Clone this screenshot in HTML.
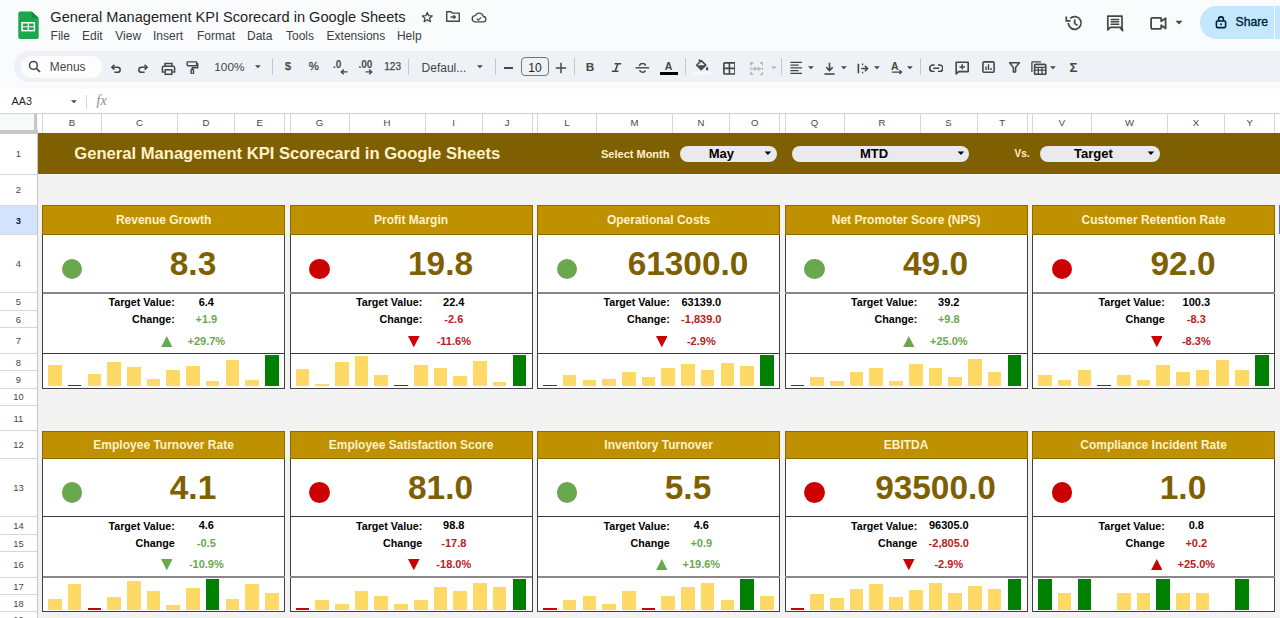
<!DOCTYPE html>
<html><head><meta charset="utf-8"><style>
html,body{margin:0;padding:0;width:1280px;height:618px;overflow:hidden;background:#fff;}
body{position:relative;font-family:"Liberation Sans", sans-serif;}
.t{position:absolute;white-space:nowrap;}
.r{position:absolute;}
</style></head><body>
<div class="r" style="left:0.00px;top:0.00px;width:1280.00px;height:88.50px;background:#f9fbfd;"></div>
<svg class="r" style="left:17.50px;top:10.50px;" width="21" height="28" viewBox="0 0 21 28"><path d="M2 0.4 H13.6 L20.7 7 V26.3 A1.7 1.7 0 0 1 19 28 H2 A1.7 1.7 0 0 1 0.3 26.3 V2 A1.7 1.7 0 0 1 2 0.4 Z" fill="#19a84e"/><path d="M13.6 0.4 L20.7 7 H15.3 A1.7 1.7 0 0 1 13.6 5.3Z" fill="#0e8c3e"/><rect x="3.3" y="11" width="13.8" height="9.4" fill="#fff"/><rect x="4.9" y="12.5" width="4.8" height="2.8" fill="#19a84e"/><rect x="10.9" y="12.5" width="4.8" height="2.8" fill="#19a84e"/><rect x="4.9" y="16.3" width="4.8" height="2.6" fill="#19a84e"/><rect x="10.9" y="16.3" width="4.8" height="2.6" fill="#19a84e"/></svg>
<div class="t" style="left:50.30px;top:9.94px;font-size:14.6px;line-height:14.6px;color:#1f1f1f;font-weight:normal;">General Management KPI Scorecard in Google Sheets</div>
<svg class="r" style="left:421.00px;top:10.80px;" width="12.5" height="12.5" viewBox="0 0 16 16"><path d="M8 1.8 L9.8 6 L14.3 6.3 L10.9 9.2 L12 13.6 L8 11.2 L4 13.6 L5.1 9.2 L1.7 6.3 L6.2 6 Z" fill="none" stroke="#444746" stroke-width="1.6" stroke-linejoin="round"/></svg>
<svg class="r" style="left:445.00px;top:10.00px;" width="16" height="13" viewBox="0 0 16 13"><path d="M1.7 1.7 H6 L7.4 3.1 H14.3 V11.2 H1.7 Z" fill="none" stroke="#444746" stroke-width="1.4" stroke-linejoin="round"/><path d="M5.5 7 H10.3 M8.5 5.2 L10.4 7 L8.5 8.8" fill="none" stroke="#444746" stroke-width="1.3"/></svg>
<svg class="r" style="left:470.80px;top:10.90px;" width="15.8" height="13.3" viewBox="0 0 19 16"><path d="M5 13 H14.5 A3.2 3.2 0 0 0 14.8 6.6 A5 5 0 0 0 5.3 5.6 A3.7 3.7 0 0 0 5 13 Z" fill="none" stroke="#444746" stroke-width="1.6"/><path d="M7 9.3 L8.8 11 L12.2 7.6" fill="none" stroke="#444746" stroke-width="1.4"/></svg>
<div class="t" style="left:50.60px;top:29.74px;font-size:12.0px;line-height:12.0px;color:#3c4043;font-weight:normal;">File</div>
<div class="t" style="left:82.00px;top:29.74px;font-size:12.0px;line-height:12.0px;color:#3c4043;font-weight:normal;">Edit</div>
<div class="t" style="left:115.30px;top:29.74px;font-size:12.0px;line-height:12.0px;color:#3c4043;font-weight:normal;">View</div>
<div class="t" style="left:153.00px;top:29.74px;font-size:12.0px;line-height:12.0px;color:#3c4043;font-weight:normal;">Insert</div>
<div class="t" style="left:197.00px;top:29.74px;font-size:12.0px;line-height:12.0px;color:#3c4043;font-weight:normal;">Format</div>
<div class="t" style="left:247.00px;top:29.74px;font-size:12.0px;line-height:12.0px;color:#3c4043;font-weight:normal;">Data</div>
<div class="t" style="left:286.00px;top:29.74px;font-size:12.0px;line-height:12.0px;color:#3c4043;font-weight:normal;">Tools</div>
<div class="t" style="left:326.60px;top:29.74px;font-size:12.0px;line-height:12.0px;color:#3c4043;font-weight:normal;">Extensions</div>
<div class="t" style="left:396.90px;top:29.74px;font-size:12.0px;line-height:12.0px;color:#3c4043;font-weight:normal;">Help</div>
<svg class="r" style="left:1064.00px;top:13.00px;" width="20" height="20" viewBox="0 0 20 20"><path d="M4.3 10 A6.4 6.4 0 1 0 6.2 5.4" fill="none" stroke="#444746" stroke-width="1.7"/><path d="M2.3 3.6 V7.9 H6.6" fill="none" stroke="#444746" stroke-width="1.7"/><path d="M10.7 6.5 V10.6 L13.6 12.4" fill="none" stroke="#444746" stroke-width="1.7"/></svg>
<svg class="r" style="left:1105.00px;top:13.00px;" width="20" height="20" viewBox="0 0 20 20"><path d="M2.8 3.2 H17 V14.3 H5.3 L2.8 16.8 Z M17 14.3 L17.6 17.6 L14.8 14.3" fill="none" stroke="#444746" stroke-width="1.7" stroke-linejoin="round"/><path d="M5.6 6.4 H14.2 M5.6 8.8 H14.2 M5.6 11.2 H14.2" stroke="#444746" stroke-width="1.5"/></svg>
<svg class="r" style="left:1148.00px;top:13.00px;" width="22" height="20" viewBox="0 0 22 20"><path d="M3.1 6 Q3.1 4.8 4.3 4.8 H12.4 Q13.2 4.8 13.2 5.6 V8.3 L17.6 5.2 V15.4 L13.2 12.3 V15 Q13.2 15.8 12.4 15.8 H4.3 Q3.1 15.8 3.1 14.6 Z" fill="none" stroke="#444746" stroke-width="1.8" stroke-linejoin="round"/></svg>
<svg class="r" style="left:1174.50px;top:19.50px;" width="8" height="5" viewBox="0 0 8 5"><path d="M0.5 0.8 H7.5 L4 4.4Z" fill="#444746"/></svg>
<div class="r" style="left:1200.40px;top:6.00px;width:73.20px;height:32.50px;background:#c2e7ff;border-radius:16.25px 0 0 16.25px;"></div>
<div class="r" style="left:1274.60px;top:6.00px;width:6.00px;height:32.50px;background:#c2e7ff;"></div>
<svg class="r" style="left:1214.00px;top:15.00px;" width="14" height="14" viewBox="0 0 14 14"><rect x="2.4" y="6" width="9.2" height="6.6" rx="1" fill="none" stroke="#001d35" stroke-width="1.6"/><path d="M4.6 6 V4.3 A2.4 2.4 0 0 1 9.4 4.3 V6" fill="none" stroke="#001d35" stroke-width="1.6"/><circle cx="7" cy="9.3" r="1" fill="#001d35"/></svg>
<div class="t" style="left:1235.60px;top:16.27px;font-size:12.2px;line-height:12.2px;color:#001d35;font-weight:normal;-webkit-text-stroke:0.35px #001d35;">Share</div>
<div class="r" style="left:14.00px;top:50.60px;width:1280.00px;height:31.90px;background:#eef1f6;border-radius:16px;"></div>
<div class="r" style="left:20.60px;top:56.00px;width:81.40px;height:22.40px;background:#fdfdfe;border-radius:11.2px;"></div>
<svg class="r" style="left:28.30px;top:60.30px;" width="14" height="14" viewBox="0 0 14 14"><circle cx="5.4" cy="5.4" r="3.9" fill="none" stroke="#444746" stroke-width="1.5"/><path d="M8.2 8.2 L12 12" stroke="#444746" stroke-width="1.7"/></svg>
<div class="t" style="left:49.80px;top:61.83px;font-size:11.9px;line-height:11.9px;color:#444746;font-weight:normal;">Menus</div>
<svg class="r" style="left:110.00px;top:62.00px;" width="13" height="13" viewBox="0 0 13 13"><path d="M3.2 5.2 H7.6 A2.55 2.55 0 0 1 7.6 10.3 H4.4" fill="none" stroke="#444746" stroke-width="1.6"/><path d="M4.4 2.8 L1.9 5.2 L4.4 7.6" fill="none" stroke="#444746" stroke-width="1.6"/></svg>
<svg class="r" style="left:135.50px;top:62.00px;" width="13" height="13" viewBox="0 0 13 13"><path d="M9.8 5.2 H5.4 A2.55 2.55 0 0 0 5.4 10.3 H8.6" fill="none" stroke="#444746" stroke-width="1.6"/><path d="M8.6 2.8 L11.1 5.2 L8.6 7.6" fill="none" stroke="#444746" stroke-width="1.6"/></svg>
<svg class="r" style="left:160.50px;top:61.50px;" width="15" height="14" viewBox="0 0 15 14"><path d="M4 4.2 V1.6 H11 V4.2" fill="none" stroke="#444746" stroke-width="1.5"/><path d="M3.6 10 H1.4 V5.8 A1.6 1.6 0 0 1 3 4.2 H12 A1.6 1.6 0 0 1 13.6 5.8 V10 H11.4" fill="none" stroke="#444746" stroke-width="1.5"/><rect x="4.2" y="7.8" width="6.6" height="4.5" fill="none" stroke="#444746" stroke-width="1.5"/></svg>
<svg class="r" style="left:186.00px;top:60.90px;" width="12.6" height="13.5" viewBox="0 0 14 15"><rect x="1.3" y="1" width="10.6" height="4.2" rx="0.8" fill="none" stroke="#444746" stroke-width="1.6"/><path d="M11.9 3.1 H13 V7.4 H7 V9.4" fill="none" stroke="#444746" stroke-width="1.6"/><rect x="5.7" y="9.4" width="2.6" height="5" rx="0.8" fill="none" stroke="#444746" stroke-width="1.6"/></svg>
<div class="t" style="left:214.30px;top:62.31px;font-size:11.8px;line-height:11.8px;color:#444746;font-weight:normal;">100%</div>
<svg class="r" style="left:255.40px;top:65.20px;" width="6" height="4" viewBox="0 0 6 4"><path d="M0 0.2 H5.8 L2.9 3.2Z" fill="#444746"/></svg>
<div class="r" style="left:272.00px;top:58.30px;width:1.00px;height:17.00px;background:#c7c7c7;"></div>
<div class="t" style="left:-112.10px;width:800px;text-align:center;top:61.27px;font-size:11.5px;line-height:11.5px;color:#444746;font-weight:bold;">$</div>
<div class="t" style="left:-86.20px;width:800px;text-align:center;top:61.43px;font-size:11.3px;line-height:11.3px;color:#444746;font-weight:normal;-webkit-text-stroke:0.3px #444746;">%</div>
<div class="t" style="left:333.00px;top:59.94px;font-size:10px;line-height:10px;color:#444746;font-weight:bold;">.0</div>
<svg class="r" style="left:339.50px;top:69.00px;" width="8" height="6" viewBox="0 0 8 6"><path d="M7.5 2.9 H1.5 M3.8 0.6 L1.3 2.9 L3.8 5.2" fill="none" stroke="#444746" stroke-width="1.4"/></svg>
<div class="t" style="left:358.50px;top:59.94px;font-size:10px;line-height:10px;color:#444746;font-weight:bold;">.00</div>
<svg class="r" style="left:365.30px;top:69.00px;" width="8" height="6" viewBox="0 0 8 6"><path d="M0.5 2.9 H6.5 M4.2 0.6 L6.7 2.9 L4.2 5.2" fill="none" stroke="#444746" stroke-width="1.4"/></svg>
<div class="t" style="left:-7.40px;width:800px;text-align:center;top:62.03px;font-size:10px;line-height:10px;color:#444746;font-weight:normal;-webkit-text-stroke:0.25px #444746;">123</div>
<div class="r" style="left:408.30px;top:59.30px;width:1.00px;height:16.00px;background:#c7c7c7;"></div>
<div class="t" style="left:421.60px;top:61.54px;font-size:12px;line-height:12px;color:#444746;font-weight:normal;">Defaul...</div>
<svg class="r" style="left:477.00px;top:65.20px;" width="6" height="4" viewBox="0 0 6 4"><path d="M0 0.2 H5.8 L2.9 3.2Z" fill="#444746"/></svg>
<div class="r" style="left:495.30px;top:58.30px;width:1.00px;height:17.00px;background:#c7c7c7;"></div>
<div class="r" style="left:503.50px;top:67.10px;width:9.50px;height:1.50px;background:#444746;"></div>
<div class="r" style="left:521.00px;top:57.20px;width:27.80px;height:19.30px;background:transparent;border:1px solid #747775;border-radius:4px;box-sizing:border-box;"></div>
<div class="t" style="left:134.90px;width:800px;text-align:center;top:61.54px;font-size:12px;line-height:12px;color:#1f1f1f;font-weight:normal;">10</div>
<svg class="r" style="left:554.50px;top:62.30px;" width="12" height="12" viewBox="0 0 12 12"><path d="M6 0.8 V11.2 M0.8 6 H11.2" stroke="#444746" stroke-width="1.5"/></svg>
<div class="r" style="left:574.20px;top:58.30px;width:1.00px;height:17.00px;background:#c7c7c7;"></div>
<div class="t" style="left:190.00px;width:800px;text-align:center;top:61.61px;font-size:11.8px;line-height:11.8px;color:#444746;font-weight:bold;">B</div>
<svg class="r" style="left:610.50px;top:63.00px;" width="11" height="9" viewBox="0 0 11 9"><path d="M3.6 0.8 H10.2 M0.8 8.2 H7.4 M6.9 0.8 L4.1 8.2" fill="none" stroke="#444746" stroke-width="1.6"/></svg>
<svg class="r" style="left:634.50px;top:62.50px;" width="15" height="11" viewBox="0 0 15 11"><path d="M0.5 4.8 H14.2" stroke="#444746" stroke-width="1.4"/><path d="M4.5 3.2 A3 2.4 0 0 1 10.5 2.6 M4.6 7.2 A3 2.4 0 0 0 10.4 7.6" fill="none" stroke="#444746" stroke-width="1.5"/></svg>
<div class="t" style="left:268.60px;width:800px;text-align:center;top:60.51px;font-size:10.5px;line-height:10.5px;color:#444746;font-weight:bold;">A</div>
<div class="r" style="left:659.60px;top:72.00px;width:18.30px;height:2.80px;background:#000;"></div>
<div class="r" style="left:685.30px;top:58.30px;width:1.00px;height:17.00px;background:#c7c7c7;"></div>
<svg class="r" style="left:694.50px;top:58.50px;" width="14" height="12" viewBox="0 0 14 12"><path d="M3.7 0.6 L5.8 2.7 M1.6 6.3 L6.3 1.6 L10.8 6.1 L6.2 10.7 Z" fill="none" stroke="#444746" stroke-width="1.5" stroke-linejoin="round"/><path d="M2.4 6.3 H10 L6.2 10.2Z" fill="#444746"/><path d="M12.1 7.6 Q13.4 9.3 13.4 10.1 A1.3 1.3 0 0 1 10.8 10.1 Q10.8 9.3 12.1 7.6Z" fill="#444746"/></svg>
<div class="r" style="left:691.60px;top:72.00px;width:19.10px;height:2.80px;background:#f6f8fb;"></div>
<svg class="r" style="left:722.60px;top:61.90px;" width="12.8" height="12.8" viewBox="0 0 12.8 12.8"><rect x="0.85" y="0.85" width="11.1" height="11.1" rx="0.8" fill="none" stroke="#444746" stroke-width="1.6"/><path d="M6.4 0.85 V11.95 M0.85 6.4 H11.95" stroke="#444746" stroke-width="1.6"/></svg>
<svg class="r" style="left:749.50px;top:61.60px;" width="13.5" height="13.5" viewBox="0 0 13.5 13.5"><path d="M0.9 3.5 V0.9 H3.5 M10 0.9 H12.6 V3.5 M12.6 10 V12.6 H10 M3.5 12.6 H0.9 V10" fill="none" stroke="#b5b7b8" stroke-width="1.6"/><path d="M0.9 5.4 V8.1 M12.6 5.4 V8.1 M2.4 6.75 H5.8 M4.4 5 L6 6.75 L4.4 8.5 M11.1 6.75 H7.7 M9.1 5 L7.5 6.75 L9.1 8.5" fill="none" stroke="#b5b7b8" stroke-width="1.4"/></svg>
<svg class="r" style="left:770.60px;top:66.00px;" width="6" height="4" viewBox="0 0 6 4"><path d="M0 0.2 H5.8 L2.9 3.2Z" fill="#b5b7b8"/></svg>
<div class="r" style="left:781.20px;top:58.30px;width:1.00px;height:17.00px;background:#c7c7c7;"></div>
<svg class="r" style="left:789.80px;top:61.30px;" width="13" height="13" viewBox="0 0 13 13"><path d="M0.4 1.3 H12 M0.4 4.05 H8.6 M0.4 6.8 H12 M0.4 9.55 H8.6 M0.4 12.3 H12" stroke="#444746" stroke-width="1.3"/></svg>
<svg class="r" style="left:807.60px;top:66.00px;" width="6" height="4" viewBox="0 0 6 4"><path d="M0 0.2 H5.8 L2.9 3.2Z" fill="#444746"/></svg>
<svg class="r" style="left:823.50px;top:61.50px;" width="11" height="13" viewBox="0 0 11 13"><path d="M5.5 0.8 V8.5 M2.3 5.3 L5.5 8.5 L8.7 5.3" fill="none" stroke="#444746" stroke-width="1.6"/><path d="M0.4 12 H10.6" stroke="#444746" stroke-width="1.6"/></svg>
<svg class="r" style="left:840.80px;top:66.00px;" width="6" height="4" viewBox="0 0 6 4"><path d="M0 0.2 H5.8 L2.9 3.2Z" fill="#444746"/></svg>
<svg class="r" style="left:856.50px;top:62.50px;" width="12" height="11" viewBox="0 0 12 11"><path d="M1.4 0.8 V10.2" stroke="#444746" stroke-width="1.6"/><path d="M4.3 5.5 H10.6 M7.9 2.8 L10.6 5.5 L7.9 8.2" fill="none" stroke="#444746" stroke-width="1.5"/><path d="M5.6 0.6 V2.2 M5.6 8.8 V10.4" stroke="#444746" stroke-width="1.2"/></svg>
<svg class="r" style="left:873.80px;top:66.00px;" width="6" height="4" viewBox="0 0 6 4"><path d="M0 0.2 H5.8 L2.9 3.2Z" fill="#444746"/></svg>
<div class="t" style="left:494.80px;width:800px;text-align:center;top:60.71px;font-size:10.5px;line-height:10.5px;color:#444746;font-weight:bold;">A</div>
<svg class="r" style="left:890.50px;top:69.60px;" width="12" height="5" viewBox="0 0 12 5"><path d="M0.8 2.1 H10.4 M8.4 0.2 L10.6 2.1 L8.4 4" fill="none" stroke="#444746" stroke-width="1.3"/></svg>
<svg class="r" style="left:907.20px;top:66.00px;" width="6" height="4" viewBox="0 0 6 4"><path d="M0 0.2 H5.8 L2.9 3.2Z" fill="#444746"/></svg>
<div class="r" style="left:920.20px;top:58.30px;width:1.00px;height:17.00px;background:#c7c7c7;"></div>
<svg class="r" style="left:928.80px;top:63.50px;" width="14.5" height="8.5" viewBox="0 0 14.5 8.5"><path d="M5.6 1 H3.9 A3.2 3.2 0 0 0 3.9 7.5 H5.6 M8.9 1 H10.6 A3.2 3.2 0 0 1 10.6 7.5 H8.9 M4.3 4.25 H10.2" fill="none" stroke="#444746" stroke-width="1.6"/></svg>
<svg class="r" style="left:954.50px;top:60.60px;" width="15" height="14" viewBox="0 0 15 14"><path d="M1.2 1.2 H13.2 V10.6 H3.6 L1.2 13 Z" fill="none" stroke="#444746" stroke-width="1.6" stroke-linejoin="round"/><path d="M7.2 3.2 V8.6 M4.5 5.9 H9.9" stroke="#444746" stroke-width="1.5"/></svg>
<svg class="r" style="left:981.50px;top:61.40px;" width="13" height="12" viewBox="0 0 13 12"><rect x="0.9" y="0.9" width="11.2" height="10.4" rx="1.3" fill="none" stroke="#444746" stroke-width="1.6"/><path d="M4 5.5 V9 M6.5 3.3 V9 M9 7 V9" stroke="#444746" stroke-width="1.4"/></svg>
<svg class="r" style="left:1008.70px;top:62.30px;" width="11" height="10.5" viewBox="0 0 11 10.5"><path d="M0.6 0.8 H10.4 L6.6 5.4 V10 H4.4 V5.4 Z" fill="none" stroke="#444746" stroke-width="1.5" stroke-linejoin="round"/></svg>
<svg class="r" style="left:1030.50px;top:60.60px;" width="16" height="14" viewBox="0 0 16 14"><path d="M0.9 11 V1.6 Q0.9 0.9 1.6 0.9 H10" fill="none" stroke="#444746" stroke-width="1.3"/><rect x="3.6" y="3.4" width="11.2" height="10" rx="1.2" fill="none" stroke="#444746" stroke-width="1.6"/><path d="M3.6 6.3 H14.8 M3.6 9.1 H14.8 M7.3 6.3 V13.4 M11 6.3 V13.4" stroke="#444746" stroke-width="1.3"/></svg>
<svg class="r" style="left:1050.20px;top:66.00px;" width="6" height="4" viewBox="0 0 6 4"><path d="M0 0.2 H5.8 L2.9 3.2Z" fill="#444746"/></svg>
<div class="t" style="left:673.40px;width:800px;text-align:center;top:61.34px;font-size:13.3px;line-height:13.3px;color:#444746;font-weight:bold;">&Sigma;</div>
<div class="r" style="left:0.00px;top:88.50px;width:1280.00px;height:25.00px;background:#ffffff;"></div>
<div class="t" style="left:11.60px;top:95.86px;font-size:10.8px;line-height:10.8px;color:#1f1f1f;font-weight:normal;">AA3</div>
<svg class="r" style="left:70.80px;top:100.00px;" width="6" height="4" viewBox="0 0 6 4"><path d="M0 0.2 H5.8 L2.9 3.2Z" fill="#444746"/></svg>
<div class="r" style="left:86.30px;top:94.50px;width:1.00px;height:14.00px;background:#d5d7da;"></div>
<div class="t" style="left:96.50px;top:93.75px;font-size:14px;line-height:14px;color:#8a8d90;font-weight:normal;font-family:'Liberation Serif',serif;font-style:italic;">fx</div>
<div class="r" style="left:0.00px;top:113.40px;width:1280.00px;height:504.60px;background:#f3f3f3;"></div>
<div class="r" style="left:37.50px;top:113.40px;width:1280.00px;height:19.60px;background:#ffffff;"></div>
<div class="r" style="left:0.00px;top:112.90px;width:1280.00px;height:1.00px;background:#dadce0;"></div>
<div class="r" style="left:42.00px;top:113.40px;width:1.00px;height:19.60px;background:#d6d6d6;"></div>
<div class="r" style="left:101.00px;top:113.40px;width:1.00px;height:19.60px;background:#d6d6d6;"></div>
<div class="t" style="left:-328.00px;width:800px;text-align:center;top:118.47px;font-size:9.6px;line-height:9.6px;color:#444746;font-weight:normal;">B</div>
<div class="r" style="left:177.00px;top:113.40px;width:1.00px;height:19.60px;background:#d6d6d6;"></div>
<div class="t" style="left:-260.50px;width:800px;text-align:center;top:118.47px;font-size:9.6px;line-height:9.6px;color:#444746;font-weight:normal;">C</div>
<div class="r" style="left:234.00px;top:113.40px;width:1.00px;height:19.60px;background:#d6d6d6;"></div>
<div class="t" style="left:-194.00px;width:800px;text-align:center;top:118.47px;font-size:9.6px;line-height:9.6px;color:#444746;font-weight:normal;">D</div>
<div class="r" style="left:284.25px;top:113.40px;width:1.00px;height:19.60px;background:#d6d6d6;"></div>
<div class="t" style="left:-140.38px;width:800px;text-align:center;top:118.47px;font-size:9.6px;line-height:9.6px;color:#444746;font-weight:normal;">E</div>
<div class="r" style="left:289.50px;top:113.40px;width:1.00px;height:19.60px;background:#d6d6d6;"></div>
<div class="r" style="left:348.50px;top:113.40px;width:1.00px;height:19.60px;background:#d6d6d6;"></div>
<div class="t" style="left:-80.50px;width:800px;text-align:center;top:118.47px;font-size:9.6px;line-height:9.6px;color:#444746;font-weight:normal;">G</div>
<div class="r" style="left:424.50px;top:113.40px;width:1.00px;height:19.60px;background:#d6d6d6;"></div>
<div class="t" style="left:-13.00px;width:800px;text-align:center;top:118.47px;font-size:9.6px;line-height:9.6px;color:#444746;font-weight:normal;">H</div>
<div class="r" style="left:481.50px;top:113.40px;width:1.00px;height:19.60px;background:#d6d6d6;"></div>
<div class="t" style="left:53.50px;width:800px;text-align:center;top:118.47px;font-size:9.6px;line-height:9.6px;color:#444746;font-weight:normal;">I</div>
<div class="r" style="left:531.75px;top:113.40px;width:1.00px;height:19.60px;background:#d6d6d6;"></div>
<div class="t" style="left:107.12px;width:800px;text-align:center;top:118.47px;font-size:9.6px;line-height:9.6px;color:#444746;font-weight:normal;">J</div>
<div class="r" style="left:537.00px;top:113.40px;width:1.00px;height:19.60px;background:#d6d6d6;"></div>
<div class="r" style="left:596.00px;top:113.40px;width:1.00px;height:19.60px;background:#d6d6d6;"></div>
<div class="t" style="left:167.00px;width:800px;text-align:center;top:118.47px;font-size:9.6px;line-height:9.6px;color:#444746;font-weight:normal;">L</div>
<div class="r" style="left:672.00px;top:113.40px;width:1.00px;height:19.60px;background:#d6d6d6;"></div>
<div class="t" style="left:234.50px;width:800px;text-align:center;top:118.47px;font-size:9.6px;line-height:9.6px;color:#444746;font-weight:normal;">M</div>
<div class="r" style="left:729.00px;top:113.40px;width:1.00px;height:19.60px;background:#d6d6d6;"></div>
<div class="t" style="left:301.00px;width:800px;text-align:center;top:118.47px;font-size:9.6px;line-height:9.6px;color:#444746;font-weight:normal;">N</div>
<div class="r" style="left:779.25px;top:113.40px;width:1.00px;height:19.60px;background:#d6d6d6;"></div>
<div class="t" style="left:354.62px;width:800px;text-align:center;top:118.47px;font-size:9.6px;line-height:9.6px;color:#444746;font-weight:normal;">O</div>
<div class="r" style="left:784.50px;top:113.40px;width:1.00px;height:19.60px;background:#d6d6d6;"></div>
<div class="r" style="left:843.50px;top:113.40px;width:1.00px;height:19.60px;background:#d6d6d6;"></div>
<div class="t" style="left:414.50px;width:800px;text-align:center;top:118.47px;font-size:9.6px;line-height:9.6px;color:#444746;font-weight:normal;">Q</div>
<div class="r" style="left:919.50px;top:113.40px;width:1.00px;height:19.60px;background:#d6d6d6;"></div>
<div class="t" style="left:482.00px;width:800px;text-align:center;top:118.47px;font-size:9.6px;line-height:9.6px;color:#444746;font-weight:normal;">R</div>
<div class="r" style="left:976.50px;top:113.40px;width:1.00px;height:19.60px;background:#d6d6d6;"></div>
<div class="t" style="left:548.50px;width:800px;text-align:center;top:118.47px;font-size:9.6px;line-height:9.6px;color:#444746;font-weight:normal;">S</div>
<div class="r" style="left:1026.75px;top:113.40px;width:1.00px;height:19.60px;background:#d6d6d6;"></div>
<div class="t" style="left:602.12px;width:800px;text-align:center;top:118.47px;font-size:9.6px;line-height:9.6px;color:#444746;font-weight:normal;">T</div>
<div class="r" style="left:1032.00px;top:113.40px;width:1.00px;height:19.60px;background:#d6d6d6;"></div>
<div class="r" style="left:1091.00px;top:113.40px;width:1.00px;height:19.60px;background:#d6d6d6;"></div>
<div class="t" style="left:662.00px;width:800px;text-align:center;top:118.47px;font-size:9.6px;line-height:9.6px;color:#444746;font-weight:normal;">V</div>
<div class="r" style="left:1167.00px;top:113.40px;width:1.00px;height:19.60px;background:#d6d6d6;"></div>
<div class="t" style="left:729.50px;width:800px;text-align:center;top:118.47px;font-size:9.6px;line-height:9.6px;color:#444746;font-weight:normal;">W</div>
<div class="r" style="left:1224.00px;top:113.40px;width:1.00px;height:19.60px;background:#d6d6d6;"></div>
<div class="t" style="left:796.00px;width:800px;text-align:center;top:118.47px;font-size:9.6px;line-height:9.6px;color:#444746;font-weight:normal;">X</div>
<div class="r" style="left:1274.25px;top:113.40px;width:1.00px;height:19.60px;background:#d6d6d6;"></div>
<div class="t" style="left:849.62px;width:800px;text-align:center;top:118.47px;font-size:9.6px;line-height:9.6px;color:#444746;font-weight:normal;">Y</div>
<div class="r" style="left:1299.50px;top:113.40px;width:1.00px;height:19.60px;background:#d6d6d6;"></div>
<div class="t" style="left:887.38px;width:800px;text-align:center;top:118.47px;font-size:9.6px;line-height:9.6px;color:#444746;font-weight:normal;">Z</div>
<div class="r" style="left:0.00px;top:133.00px;width:37.50px;height:485.00px;background:#ffffff;"></div>
<div class="r" style="left:0.00px;top:205.00px;width:37.50px;height:29.50px;background:#d3e3fd;"></div>
<div class="r" style="left:0.00px;top:173.50px;width:37.50px;height:1.00px;background:#d6d6d6;"></div>
<div class="t" style="left:-381.60px;width:800px;text-align:center;top:149.34px;font-size:9.4px;line-height:9.4px;color:#444746;font-weight:normal;">1</div>
<div class="r" style="left:0.00px;top:204.50px;width:37.50px;height:1.00px;background:#d6d6d6;"></div>
<div class="t" style="left:-381.60px;width:800px;text-align:center;top:185.34px;font-size:9.4px;line-height:9.4px;color:#444746;font-weight:normal;">2</div>
<div class="r" style="left:0.00px;top:234.00px;width:37.50px;height:1.00px;background:#d6d6d6;"></div>
<div class="t" style="left:-381.60px;width:800px;text-align:center;top:215.59px;font-size:9.4px;line-height:9.4px;color:#041e49;font-weight:bold;">3</div>
<div class="r" style="left:0.00px;top:292.00px;width:37.50px;height:1.00px;background:#d6d6d6;"></div>
<div class="t" style="left:-381.60px;width:800px;text-align:center;top:259.34px;font-size:9.4px;line-height:9.4px;color:#444746;font-weight:normal;">4</div>
<div class="r" style="left:0.00px;top:309.75px;width:37.50px;height:1.00px;background:#d6d6d6;"></div>
<div class="t" style="left:-381.60px;width:800px;text-align:center;top:297.22px;font-size:9.4px;line-height:9.4px;color:#444746;font-weight:normal;">5</div>
<div class="r" style="left:0.00px;top:327.00px;width:37.50px;height:1.00px;background:#d6d6d6;"></div>
<div class="t" style="left:-381.60px;width:800px;text-align:center;top:314.72px;font-size:9.4px;line-height:9.4px;color:#444746;font-weight:normal;">6</div>
<div class="r" style="left:0.00px;top:353.00px;width:37.50px;height:1.00px;background:#d6d6d6;"></div>
<div class="t" style="left:-381.60px;width:800px;text-align:center;top:336.34px;font-size:9.4px;line-height:9.4px;color:#444746;font-weight:normal;">7</div>
<div class="r" style="left:0.00px;top:369.75px;width:37.50px;height:1.00px;background:#d6d6d6;"></div>
<div class="t" style="left:-381.60px;width:800px;text-align:center;top:357.72px;font-size:9.4px;line-height:9.4px;color:#444746;font-weight:normal;">8</div>
<div class="r" style="left:0.00px;top:387.50px;width:37.50px;height:1.00px;background:#d6d6d6;"></div>
<div class="t" style="left:-381.60px;width:800px;text-align:center;top:374.97px;font-size:9.4px;line-height:9.4px;color:#444746;font-weight:normal;">9</div>
<div class="r" style="left:0.00px;top:404.50px;width:37.50px;height:1.00px;background:#d6d6d6;"></div>
<div class="t" style="left:-381.60px;width:800px;text-align:center;top:392.34px;font-size:9.4px;line-height:9.4px;color:#444746;font-weight:normal;">10</div>
<div class="r" style="left:0.00px;top:430.10px;width:37.50px;height:1.00px;background:#d6d6d6;"></div>
<div class="t" style="left:-381.60px;width:800px;text-align:center;top:413.64px;font-size:9.4px;line-height:9.4px;color:#444746;font-weight:normal;">11</div>
<div class="r" style="left:0.00px;top:457.50px;width:37.50px;height:1.00px;background:#d6d6d6;"></div>
<div class="t" style="left:-381.60px;width:800px;text-align:center;top:440.14px;font-size:9.4px;line-height:9.4px;color:#444746;font-weight:normal;">12</div>
<div class="r" style="left:0.00px;top:516.00px;width:37.50px;height:1.00px;background:#d6d6d6;"></div>
<div class="t" style="left:-381.60px;width:800px;text-align:center;top:483.09px;font-size:9.4px;line-height:9.4px;color:#444746;font-weight:normal;">13</div>
<div class="r" style="left:0.00px;top:533.90px;width:37.50px;height:1.00px;background:#d6d6d6;"></div>
<div class="t" style="left:-381.60px;width:800px;text-align:center;top:521.29px;font-size:9.4px;line-height:9.4px;color:#444746;font-weight:normal;">14</div>
<div class="r" style="left:0.00px;top:551.10px;width:37.50px;height:1.00px;background:#d6d6d6;"></div>
<div class="t" style="left:-381.60px;width:800px;text-align:center;top:538.84px;font-size:9.4px;line-height:9.4px;color:#444746;font-weight:normal;">15</div>
<div class="r" style="left:0.00px;top:576.50px;width:37.50px;height:1.00px;background:#d6d6d6;"></div>
<div class="t" style="left:-381.60px;width:800px;text-align:center;top:560.14px;font-size:9.4px;line-height:9.4px;color:#444746;font-weight:normal;">16</div>
<div class="r" style="left:0.00px;top:594.00px;width:37.50px;height:1.00px;background:#d6d6d6;"></div>
<div class="t" style="left:-381.60px;width:800px;text-align:center;top:581.59px;font-size:9.4px;line-height:9.4px;color:#444746;font-weight:normal;">17</div>
<div class="r" style="left:0.00px;top:611.10px;width:37.50px;height:1.00px;background:#d6d6d6;"></div>
<div class="t" style="left:-381.60px;width:800px;text-align:center;top:598.89px;font-size:9.4px;line-height:9.4px;color:#444746;font-weight:normal;">18</div>
<div class="r" style="left:0.00px;top:626.90px;width:37.50px;height:1.00px;background:#d6d6d6;"></div>
<div class="t" style="left:-381.60px;width:800px;text-align:center;top:615.34px;font-size:9.4px;line-height:9.4px;color:#444746;font-weight:normal;">19</div>
<div class="r" style="left:37.00px;top:133.00px;width:1.00px;height:485.00px;background:#c4c7c5;"></div>
<div class="r" style="left:0.00px;top:113.40px;width:37.50px;height:19.60px;background:#f8f9fa;"></div>
<div class="r" style="left:34.30px;top:114.40px;width:3.20px;height:18.60px;background:#c4c7c5;"></div>
<div class="r" style="left:0.00px;top:129.50px;width:37.50px;height:3.50px;background:#c4c7c5;"></div>
<div class="r" style="left:0.00px;top:132.50px;width:1280.00px;height:1.00px;background:#c4c7c5;"></div>
<div class="r" style="left:0.00px;top:112.90px;width:1280.00px;height:1.00px;background:#d0d3d6;"></div>
<div class="r" style="left:37.50px;top:133.10px;width:1280.00px;height:40.90px;background:#7f6000;"></div>
<div class="t" style="left:74.30px;top:145.75px;font-size:16.6px;line-height:16.6px;color:#fff2cc;font-weight:bold;">General Management KPI Scorecard in Google Sheets</div>
<div class="t" style="left:601.00px;top:148.59px;font-size:11px;line-height:11px;color:#fff2cc;font-weight:bold;">Select Month</div>
<div class="r" style="left:679.80px;top:145.80px;width:97.20px;height:15.80px;background:#e8eaed;border-radius:7.9px;"></div>
<div class="t" style="left:321.40px;width:800px;text-align:center;top:147.30px;font-size:13px;line-height:13px;color:#000;font-weight:bold;">May</div>
<svg class="r" style="left:764.00px;top:151.40px;" width="8" height="5" viewBox="0 0 8 5"><path d="M0.6 0.4 H7.2 L3.9 4.0Z" fill="#000"/></svg>
<div class="r" style="left:792.20px;top:145.80px;width:177.30px;height:15.80px;background:#e8eaed;border-radius:7.9px;"></div>
<div class="t" style="left:474.00px;width:800px;text-align:center;top:147.30px;font-size:13px;line-height:13px;color:#000;font-weight:bold;">MTD</div>
<svg class="r" style="left:956.50px;top:151.40px;" width="8" height="5" viewBox="0 0 8 5"><path d="M0.6 0.4 H7.2 L3.9 4.0Z" fill="#000"/></svg>
<div class="t" style="left:622.10px;width:800px;text-align:center;top:149.44px;font-size:10px;line-height:10px;color:#fff2cc;font-weight:bold;">Vs.</div>
<div class="r" style="left:1039.80px;top:145.80px;width:119.90px;height:15.80px;background:#e8eaed;border-radius:7.9px;"></div>
<div class="t" style="left:693.50px;width:800px;text-align:center;top:147.30px;font-size:13px;line-height:13px;color:#000;font-weight:bold;">Target</div>
<svg class="r" style="left:1146.70px;top:151.40px;" width="8" height="5" viewBox="0 0 8 5"><path d="M0.6 0.4 H7.2 L3.9 4.0Z" fill="#000"/></svg>
<div class="r" style="left:42.00px;top:234.40px;width:243.25px;height:154.40px;background:#ffffff;border:1px solid #404040;border-top:none;box-sizing:border-box;"></div>
<div class="r" style="left:42.00px;top:205.20px;width:243.25px;height:29.80px;background:#bf9000;border:1px solid #8c6a00;box-sizing:border-box;"></div>
<div class="t" style="left:-236.40px;width:800px;text-align:center;top:214.34px;font-size:12px;line-height:12px;color:#fff2cc;font-weight:bold;">Revenue Growth</div>
<div class="r" style="left:42.50px;top:291.80px;width:242.25px;height:2.10px;background:#888888;"></div>
<div class="r" style="left:42.50px;top:352.80px;width:242.25px;height:1.10px;background:#3a3a3a;"></div>
<div class="r" style="left:61.50px;top:258.60px;width:20.8px;height:20.8px;border-radius:50%;background:#6aa84f;"></div>
<div class="t" style="left:-207.00px;width:800px;text-align:center;top:247.43px;font-size:33.4px;line-height:33.4px;color:#7f6000;font-weight:bold;">8.3</div>
<div class="t" style="right:1105.20px;text-align:right;top:297.24px;font-size:10.7px;line-height:10.7px;color:#000;font-weight:bold;">Target Value:</div>
<div class="t" style="left:-193.70px;width:800px;text-align:center;top:296.99px;font-size:11px;line-height:11px;color:#000;font-weight:bold;">6.4</div>
<div class="t" style="right:1105.20px;text-align:right;top:314.24px;font-size:10.7px;line-height:10.7px;color:#000;font-weight:bold;">Change:</div>
<div class="t" style="left:-193.70px;width:800px;text-align:center;top:313.99px;font-size:11px;line-height:11px;color:#6aa84f;font-weight:bold;">+1.9</div>
<div class="t" style="left:-193.70px;width:800px;text-align:center;top:335.89px;font-size:11px;line-height:11px;color:#6aa84f;font-weight:bold;">+29.7%</div>
<svg class="r" style="left:160.70px;top:335.70px;" width="11.6" height="11.3" viewBox="0 0 11.6 11.3"><path d="M5.8 0 L11.6 11.3 H0Z" fill="#6aa84f"/></svg>
<div class="r" style="left:48.10px;top:365.24px;width:13.60px;height:20.86px;background:#ffd966;"></div>
<div class="r" style="left:67.82px;top:384.50px;width:13.60px;height:1.60px;background:#cc0000;"></div>
<div class="r" style="left:87.54px;top:374.01px;width:13.60px;height:12.09px;background:#ffd966;"></div>
<div class="r" style="left:107.26px;top:362.32px;width:13.60px;height:23.78px;background:#ffd966;"></div>
<div class="r" style="left:126.98px;top:367.00px;width:13.60px;height:19.10px;background:#ffd966;"></div>
<div class="r" style="left:146.70px;top:379.28px;width:13.60px;height:6.82px;background:#ffd966;"></div>
<div class="r" style="left:166.42px;top:369.92px;width:13.60px;height:16.18px;background:#ffd966;"></div>
<div class="r" style="left:186.14px;top:366.02px;width:13.60px;height:20.08px;background:#ffd966;"></div>
<div class="r" style="left:205.86px;top:381.23px;width:13.60px;height:4.87px;background:#ffd966;"></div>
<div class="r" style="left:225.58px;top:359.78px;width:13.60px;height:26.32px;background:#ffd966;"></div>
<div class="r" style="left:245.30px;top:379.86px;width:13.60px;height:6.24px;background:#ffd966;"></div>
<div class="r" style="left:265.02px;top:355.30px;width:13.60px;height:30.80px;background:#008000;"></div>
<div class="r" style="left:289.50px;top:234.40px;width:243.25px;height:154.40px;background:#ffffff;border:1px solid #404040;border-top:none;box-sizing:border-box;"></div>
<div class="r" style="left:289.50px;top:205.20px;width:243.25px;height:29.80px;background:#bf9000;border:1px solid #8c6a00;box-sizing:border-box;"></div>
<div class="t" style="left:11.10px;width:800px;text-align:center;top:214.34px;font-size:12px;line-height:12px;color:#fff2cc;font-weight:bold;">Profit Margin</div>
<div class="r" style="left:290.00px;top:291.80px;width:242.25px;height:2.10px;background:#888888;"></div>
<div class="r" style="left:290.00px;top:352.80px;width:242.25px;height:1.10px;background:#3a3a3a;"></div>
<div class="r" style="left:309.00px;top:258.60px;width:20.8px;height:20.8px;border-radius:50%;background:#cc0000;"></div>
<div class="t" style="left:40.50px;width:800px;text-align:center;top:247.43px;font-size:33.4px;line-height:33.4px;color:#7f6000;font-weight:bold;">19.8</div>
<div class="t" style="right:857.70px;text-align:right;top:297.24px;font-size:10.7px;line-height:10.7px;color:#000;font-weight:bold;">Target Value:</div>
<div class="t" style="left:53.80px;width:800px;text-align:center;top:296.99px;font-size:11px;line-height:11px;color:#000;font-weight:bold;">22.4</div>
<div class="t" style="right:857.70px;text-align:right;top:314.24px;font-size:10.7px;line-height:10.7px;color:#000;font-weight:bold;">Change:</div>
<div class="t" style="left:53.80px;width:800px;text-align:center;top:313.99px;font-size:11px;line-height:11px;color:#bb2020;font-weight:bold;">-2.6</div>
<div class="t" style="left:53.80px;width:800px;text-align:center;top:335.89px;font-size:11px;line-height:11px;color:#bb2020;font-weight:bold;">-11.6%</div>
<svg class="r" style="left:408.20px;top:335.70px;" width="11.6" height="11.3" viewBox="0 0 11.6 11.3"><path d="M0 0 H11.6 L5.8 11.3Z" fill="#cc0000"/></svg>
<div class="r" style="left:295.60px;top:368.95px;width:13.60px;height:17.15px;background:#ffd966;"></div>
<div class="r" style="left:315.32px;top:383.57px;width:13.60px;height:2.53px;background:#ffd966;"></div>
<div class="r" style="left:335.04px;top:362.32px;width:13.60px;height:23.78px;background:#ffd966;"></div>
<div class="r" style="left:354.76px;top:355.88px;width:13.60px;height:30.22px;background:#ffd966;"></div>
<div class="r" style="left:374.48px;top:374.79px;width:13.60px;height:11.31px;background:#ffd966;"></div>
<div class="r" style="left:394.20px;top:384.50px;width:13.60px;height:1.60px;background:#cc0000;"></div>
<div class="r" style="left:413.92px;top:365.24px;width:13.60px;height:20.86px;background:#ffd966;"></div>
<div class="r" style="left:433.64px;top:367.58px;width:13.60px;height:18.52px;background:#ffd966;"></div>
<div class="r" style="left:453.36px;top:375.96px;width:13.60px;height:10.14px;background:#ffd966;"></div>
<div class="r" style="left:473.08px;top:361.15px;width:13.60px;height:24.95px;background:#ffd966;"></div>
<div class="r" style="left:492.80px;top:381.81px;width:13.60px;height:4.29px;background:#ffd966;"></div>
<div class="r" style="left:512.52px;top:355.30px;width:13.60px;height:30.80px;background:#008000;"></div>
<div class="r" style="left:537.00px;top:234.40px;width:243.25px;height:154.40px;background:#ffffff;border:1px solid #404040;border-top:none;box-sizing:border-box;"></div>
<div class="r" style="left:537.00px;top:205.20px;width:243.25px;height:29.80px;background:#bf9000;border:1px solid #8c6a00;box-sizing:border-box;"></div>
<div class="t" style="left:258.60px;width:800px;text-align:center;top:214.34px;font-size:12px;line-height:12px;color:#fff2cc;font-weight:bold;">Operational Costs</div>
<div class="r" style="left:537.50px;top:291.80px;width:242.25px;height:2.10px;background:#888888;"></div>
<div class="r" style="left:537.50px;top:352.80px;width:242.25px;height:1.10px;background:#3a3a3a;"></div>
<div class="r" style="left:556.50px;top:258.60px;width:20.8px;height:20.8px;border-radius:50%;background:#6aa84f;"></div>
<div class="t" style="left:288.00px;width:800px;text-align:center;top:247.43px;font-size:33.4px;line-height:33.4px;color:#7f6000;font-weight:bold;">61300.0</div>
<div class="t" style="right:610.20px;text-align:right;top:297.24px;font-size:10.7px;line-height:10.7px;color:#000;font-weight:bold;">Target Value:</div>
<div class="t" style="left:301.30px;width:800px;text-align:center;top:296.99px;font-size:11px;line-height:11px;color:#000;font-weight:bold;">63139.0</div>
<div class="t" style="right:610.20px;text-align:right;top:314.24px;font-size:10.7px;line-height:10.7px;color:#000;font-weight:bold;">Change:</div>
<div class="t" style="left:301.30px;width:800px;text-align:center;top:313.99px;font-size:11px;line-height:11px;color:#bb2020;font-weight:bold;">-1,839.0</div>
<div class="t" style="left:301.30px;width:800px;text-align:center;top:335.89px;font-size:11px;line-height:11px;color:#bb2020;font-weight:bold;">-2.9%</div>
<svg class="r" style="left:655.70px;top:335.70px;" width="11.6" height="11.3" viewBox="0 0 11.6 11.3"><path d="M0 0 H11.6 L5.8 11.3Z" fill="#cc0000"/></svg>
<div class="r" style="left:543.10px;top:384.50px;width:13.60px;height:1.60px;background:#cc0000;"></div>
<div class="r" style="left:562.82px;top:375.38px;width:13.60px;height:10.72px;background:#ffd966;"></div>
<div class="r" style="left:582.54px;top:380.25px;width:13.60px;height:5.85px;background:#ffd966;"></div>
<div class="r" style="left:602.26px;top:378.89px;width:13.60px;height:7.21px;background:#ffd966;"></div>
<div class="r" style="left:621.98px;top:372.45px;width:13.60px;height:13.65px;background:#ffd966;"></div>
<div class="r" style="left:641.70px;top:376.94px;width:13.60px;height:9.16px;background:#ffd966;"></div>
<div class="r" style="left:661.42px;top:367.97px;width:13.60px;height:18.13px;background:#ffd966;"></div>
<div class="r" style="left:681.14px;top:364.27px;width:13.60px;height:21.83px;background:#ffd966;"></div>
<div class="r" style="left:700.86px;top:369.53px;width:13.60px;height:16.57px;background:#ffd966;"></div>
<div class="r" style="left:720.58px;top:363.10px;width:13.60px;height:23.00px;background:#ffd966;"></div>
<div class="r" style="left:740.30px;top:366.02px;width:13.60px;height:20.08px;background:#ffd966;"></div>
<div class="r" style="left:760.02px;top:355.30px;width:13.60px;height:30.80px;background:#008000;"></div>
<div class="r" style="left:784.50px;top:234.40px;width:243.25px;height:154.40px;background:#ffffff;border:1px solid #404040;border-top:none;box-sizing:border-box;"></div>
<div class="r" style="left:784.50px;top:205.20px;width:243.25px;height:29.80px;background:#bf9000;border:1px solid #8c6a00;box-sizing:border-box;"></div>
<div class="t" style="left:506.10px;width:800px;text-align:center;top:214.34px;font-size:12px;line-height:12px;color:#fff2cc;font-weight:bold;">Net Promoter Score (NPS)</div>
<div class="r" style="left:785.00px;top:291.80px;width:242.25px;height:2.10px;background:#888888;"></div>
<div class="r" style="left:785.00px;top:352.80px;width:242.25px;height:1.10px;background:#3a3a3a;"></div>
<div class="r" style="left:804.00px;top:258.60px;width:20.8px;height:20.8px;border-radius:50%;background:#6aa84f;"></div>
<div class="t" style="left:535.50px;width:800px;text-align:center;top:247.43px;font-size:33.4px;line-height:33.4px;color:#7f6000;font-weight:bold;">49.0</div>
<div class="t" style="right:362.70px;text-align:right;top:297.24px;font-size:10.7px;line-height:10.7px;color:#000;font-weight:bold;">Target Value:</div>
<div class="t" style="left:548.80px;width:800px;text-align:center;top:296.99px;font-size:11px;line-height:11px;color:#000;font-weight:bold;">39.2</div>
<div class="t" style="right:362.70px;text-align:right;top:314.24px;font-size:10.7px;line-height:10.7px;color:#000;font-weight:bold;">Change:</div>
<div class="t" style="left:548.80px;width:800px;text-align:center;top:313.99px;font-size:11px;line-height:11px;color:#6aa84f;font-weight:bold;">+9.8</div>
<div class="t" style="left:548.80px;width:800px;text-align:center;top:335.89px;font-size:11px;line-height:11px;color:#6aa84f;font-weight:bold;">+25.0%</div>
<svg class="r" style="left:903.20px;top:335.70px;" width="11.6" height="11.3" viewBox="0 0 11.6 11.3"><path d="M5.8 0 L11.6 11.3 H0Z" fill="#6aa84f"/></svg>
<div class="r" style="left:790.60px;top:384.50px;width:13.60px;height:1.60px;background:#cc0000;"></div>
<div class="r" style="left:810.32px;top:376.74px;width:13.60px;height:9.36px;background:#ffd966;"></div>
<div class="r" style="left:830.04px;top:380.84px;width:13.60px;height:5.26px;background:#ffd966;"></div>
<div class="r" style="left:849.76px;top:372.45px;width:13.60px;height:13.65px;background:#ffd966;"></div>
<div class="r" style="left:869.48px;top:367.97px;width:13.60px;height:18.13px;background:#ffd966;"></div>
<div class="r" style="left:889.20px;top:381.23px;width:13.60px;height:4.87px;background:#ffd966;"></div>
<div class="r" style="left:908.92px;top:364.07px;width:13.60px;height:22.03px;background:#ffd966;"></div>
<div class="r" style="left:928.64px;top:367.97px;width:13.60px;height:18.13px;background:#ffd966;"></div>
<div class="r" style="left:948.36px;top:376.94px;width:13.60px;height:9.16px;background:#ffd966;"></div>
<div class="r" style="left:968.08px;top:359.39px;width:13.60px;height:26.71px;background:#ffd966;"></div>
<div class="r" style="left:987.80px;top:372.45px;width:13.60px;height:13.65px;background:#ffd966;"></div>
<div class="r" style="left:1007.52px;top:355.30px;width:13.60px;height:30.80px;background:#008000;"></div>
<div class="r" style="left:1032.00px;top:234.40px;width:243.25px;height:154.40px;background:#ffffff;border:1px solid #404040;border-top:none;box-sizing:border-box;"></div>
<div class="r" style="left:1032.00px;top:205.20px;width:243.25px;height:29.80px;background:#bf9000;border:1px solid #8c6a00;box-sizing:border-box;"></div>
<div class="t" style="left:753.60px;width:800px;text-align:center;top:214.34px;font-size:12px;line-height:12px;color:#fff2cc;font-weight:bold;">Customer Retention Rate</div>
<div class="r" style="left:1032.50px;top:291.80px;width:242.25px;height:2.10px;background:#888888;"></div>
<div class="r" style="left:1032.50px;top:352.80px;width:242.25px;height:1.10px;background:#3a3a3a;"></div>
<div class="r" style="left:1051.50px;top:258.60px;width:20.8px;height:20.8px;border-radius:50%;background:#cc0000;"></div>
<div class="t" style="left:783.00px;width:800px;text-align:center;top:247.43px;font-size:33.4px;line-height:33.4px;color:#7f6000;font-weight:bold;">92.0</div>
<div class="t" style="right:115.20px;text-align:right;top:297.24px;font-size:10.7px;line-height:10.7px;color:#000;font-weight:bold;">Target Value:</div>
<div class="t" style="left:796.30px;width:800px;text-align:center;top:296.99px;font-size:11px;line-height:11px;color:#000;font-weight:bold;">100.3</div>
<div class="t" style="right:115.20px;text-align:right;top:314.24px;font-size:10.7px;line-height:10.7px;color:#000;font-weight:bold;">Change</div>
<div class="t" style="left:796.30px;width:800px;text-align:center;top:313.99px;font-size:11px;line-height:11px;color:#bb2020;font-weight:bold;">-8.3</div>
<div class="t" style="left:796.30px;width:800px;text-align:center;top:335.89px;font-size:11px;line-height:11px;color:#bb2020;font-weight:bold;">-8.3%</div>
<svg class="r" style="left:1150.70px;top:335.70px;" width="11.6" height="11.3" viewBox="0 0 11.6 11.3"><path d="M0 0 H11.6 L5.8 11.3Z" fill="#cc0000"/></svg>
<div class="r" style="left:1038.10px;top:375.38px;width:13.60px;height:10.72px;background:#ffd966;"></div>
<div class="r" style="left:1057.82px;top:380.25px;width:13.60px;height:5.85px;background:#ffd966;"></div>
<div class="r" style="left:1077.54px;top:370.12px;width:13.60px;height:15.98px;background:#ffd966;"></div>
<div class="r" style="left:1097.26px;top:384.50px;width:13.60px;height:1.60px;background:#cc0000;"></div>
<div class="r" style="left:1116.98px;top:375.38px;width:13.60px;height:10.72px;background:#ffd966;"></div>
<div class="r" style="left:1136.70px;top:380.25px;width:13.60px;height:5.85px;background:#ffd966;"></div>
<div class="r" style="left:1156.42px;top:365.05px;width:13.60px;height:21.05px;background:#ffd966;"></div>
<div class="r" style="left:1176.14px;top:372.45px;width:13.60px;height:13.65px;background:#ffd966;"></div>
<div class="r" style="left:1195.86px;top:370.12px;width:13.60px;height:15.98px;background:#ffd966;"></div>
<div class="r" style="left:1215.58px;top:359.78px;width:13.60px;height:26.32px;background:#ffd966;"></div>
<div class="r" style="left:1235.30px;top:370.12px;width:13.60px;height:15.98px;background:#ffd966;"></div>
<div class="r" style="left:1255.02px;top:355.30px;width:13.60px;height:30.80px;background:#008000;"></div>
<div class="r" style="left:42.00px;top:458.10px;width:243.25px;height:153.90px;background:#ffffff;border:1px solid #404040;border-top:none;box-sizing:border-box;"></div>
<div class="r" style="left:42.00px;top:430.80px;width:243.25px;height:27.90px;background:#bf9000;border:1px solid #8c6a00;box-sizing:border-box;"></div>
<div class="t" style="left:-236.40px;width:800px;text-align:center;top:438.64px;font-size:12px;line-height:12px;color:#fff2cc;font-weight:bold;">Employee Turnover Rate</div>
<div class="r" style="left:42.50px;top:515.90px;width:242.25px;height:1.10px;background:#3a3a3a;"></div>
<div class="r" style="left:42.50px;top:576.00px;width:242.25px;height:1.90px;background:#888888;"></div>
<div class="r" style="left:61.50px;top:482.10px;width:20.8px;height:20.8px;border-radius:50%;background:#6aa84f;"></div>
<div class="t" style="left:-207.00px;width:800px;text-align:center;top:470.93px;font-size:33.4px;line-height:33.4px;color:#7f6000;font-weight:bold;">4.1</div>
<div class="t" style="right:1105.20px;text-align:right;top:520.74px;font-size:10.7px;line-height:10.7px;color:#000;font-weight:bold;">Target Value:</div>
<div class="t" style="left:-193.70px;width:800px;text-align:center;top:520.49px;font-size:11px;line-height:11px;color:#000;font-weight:bold;">4.6</div>
<div class="t" style="right:1105.20px;text-align:right;top:538.24px;font-size:10.7px;line-height:10.7px;color:#000;font-weight:bold;">Change</div>
<div class="t" style="left:-193.70px;width:800px;text-align:center;top:537.99px;font-size:11px;line-height:11px;color:#6aa84f;font-weight:bold;">-0.5</div>
<div class="t" style="left:-193.70px;width:800px;text-align:center;top:559.39px;font-size:11px;line-height:11px;color:#6aa84f;font-weight:bold;">-10.9%</div>
<svg class="r" style="left:160.70px;top:559.20px;" width="11.6" height="11.3" viewBox="0 0 11.6 11.3"><path d="M0 0 H11.6 L5.8 11.3Z" fill="#6aa84f"/></svg>
<div class="r" style="left:48.10px;top:599.27px;width:13.60px;height:10.33px;background:#ffd966;"></div>
<div class="r" style="left:67.82px;top:584.26px;width:13.60px;height:25.34px;background:#ffd966;"></div>
<div class="r" style="left:87.54px;top:608.00px;width:13.60px;height:1.60px;background:#cc0000;"></div>
<div class="r" style="left:107.26px;top:596.54px;width:13.60px;height:13.06px;background:#ffd966;"></div>
<div class="r" style="left:126.98px;top:581.33px;width:13.60px;height:28.27px;background:#ffd966;"></div>
<div class="r" style="left:146.70px;top:590.69px;width:13.60px;height:18.91px;background:#ffd966;"></div>
<div class="r" style="left:166.42px;top:605.12px;width:13.60px;height:4.48px;background:#ffd966;"></div>
<div class="r" style="left:186.14px;top:587.77px;width:13.60px;height:21.83px;background:#ffd966;"></div>
<div class="r" style="left:205.86px;top:578.80px;width:13.60px;height:30.80px;background:#008000;"></div>
<div class="r" style="left:225.58px;top:599.27px;width:13.60px;height:10.33px;background:#ffd966;"></div>
<div class="r" style="left:245.30px;top:584.26px;width:13.60px;height:25.34px;background:#ffd966;"></div>
<div class="r" style="left:265.02px;top:593.42px;width:13.60px;height:16.18px;background:#ffd966;"></div>
<div class="r" style="left:289.50px;top:458.10px;width:243.25px;height:153.90px;background:#ffffff;border:1px solid #404040;border-top:none;box-sizing:border-box;"></div>
<div class="r" style="left:289.50px;top:430.80px;width:243.25px;height:27.90px;background:#bf9000;border:1px solid #8c6a00;box-sizing:border-box;"></div>
<div class="t" style="left:11.10px;width:800px;text-align:center;top:438.64px;font-size:12px;line-height:12px;color:#fff2cc;font-weight:bold;">Employee Satisfaction Score</div>
<div class="r" style="left:290.00px;top:515.90px;width:242.25px;height:1.10px;background:#3a3a3a;"></div>
<div class="r" style="left:290.00px;top:576.00px;width:242.25px;height:1.90px;background:#888888;"></div>
<div class="r" style="left:309.00px;top:482.10px;width:20.8px;height:20.8px;border-radius:50%;background:#cc0000;"></div>
<div class="t" style="left:40.50px;width:800px;text-align:center;top:470.93px;font-size:33.4px;line-height:33.4px;color:#7f6000;font-weight:bold;">81.0</div>
<div class="t" style="right:857.70px;text-align:right;top:520.74px;font-size:10.7px;line-height:10.7px;color:#000;font-weight:bold;">Target Value:</div>
<div class="t" style="left:53.80px;width:800px;text-align:center;top:520.49px;font-size:11px;line-height:11px;color:#000;font-weight:bold;">98.8</div>
<div class="t" style="right:857.70px;text-align:right;top:538.24px;font-size:10.7px;line-height:10.7px;color:#000;font-weight:bold;">Change</div>
<div class="t" style="left:53.80px;width:800px;text-align:center;top:537.99px;font-size:11px;line-height:11px;color:#bb2020;font-weight:bold;">-17.8</div>
<div class="t" style="left:53.80px;width:800px;text-align:center;top:559.39px;font-size:11px;line-height:11px;color:#bb2020;font-weight:bold;">-18.0%</div>
<svg class="r" style="left:408.20px;top:559.20px;" width="11.6" height="11.3" viewBox="0 0 11.6 11.3"><path d="M0 0 H11.6 L5.8 11.3Z" fill="#cc0000"/></svg>
<div class="r" style="left:295.60px;top:608.00px;width:13.60px;height:1.60px;background:#cc0000;"></div>
<div class="r" style="left:315.32px;top:599.85px;width:13.60px;height:9.75px;background:#ffd966;"></div>
<div class="r" style="left:335.04px;top:604.34px;width:13.60px;height:5.26px;background:#ffd966;"></div>
<div class="r" style="left:354.76px;top:591.47px;width:13.60px;height:18.13px;background:#ffd966;"></div>
<div class="r" style="left:374.48px;top:595.56px;width:13.60px;height:14.04px;background:#ffd966;"></div>
<div class="r" style="left:394.20px;top:604.34px;width:13.60px;height:5.26px;background:#ffd966;"></div>
<div class="r" style="left:413.92px;top:599.85px;width:13.60px;height:9.75px;background:#ffd966;"></div>
<div class="r" style="left:433.64px;top:587.18px;width:13.60px;height:22.42px;background:#ffd966;"></div>
<div class="r" style="left:453.36px;top:591.47px;width:13.60px;height:18.13px;background:#ffd966;"></div>
<div class="r" style="left:473.08px;top:582.70px;width:13.60px;height:26.90px;background:#ffd966;"></div>
<div class="r" style="left:492.80px;top:587.18px;width:13.60px;height:22.42px;background:#ffd966;"></div>
<div class="r" style="left:512.52px;top:578.80px;width:13.60px;height:30.80px;background:#008000;"></div>
<div class="r" style="left:537.00px;top:458.10px;width:243.25px;height:153.90px;background:#ffffff;border:1px solid #404040;border-top:none;box-sizing:border-box;"></div>
<div class="r" style="left:537.00px;top:430.80px;width:243.25px;height:27.90px;background:#bf9000;border:1px solid #8c6a00;box-sizing:border-box;"></div>
<div class="t" style="left:258.60px;width:800px;text-align:center;top:438.64px;font-size:12px;line-height:12px;color:#fff2cc;font-weight:bold;">Inventory Turnover</div>
<div class="r" style="left:537.50px;top:515.90px;width:242.25px;height:1.10px;background:#3a3a3a;"></div>
<div class="r" style="left:537.50px;top:576.00px;width:242.25px;height:1.90px;background:#888888;"></div>
<div class="r" style="left:556.50px;top:482.10px;width:20.8px;height:20.8px;border-radius:50%;background:#6aa84f;"></div>
<div class="t" style="left:288.00px;width:800px;text-align:center;top:470.93px;font-size:33.4px;line-height:33.4px;color:#7f6000;font-weight:bold;">5.5</div>
<div class="t" style="right:610.20px;text-align:right;top:520.74px;font-size:10.7px;line-height:10.7px;color:#000;font-weight:bold;">Target Value:</div>
<div class="t" style="left:301.30px;width:800px;text-align:center;top:520.49px;font-size:11px;line-height:11px;color:#000;font-weight:bold;">4.6</div>
<div class="t" style="right:610.20px;text-align:right;top:538.24px;font-size:10.7px;line-height:10.7px;color:#000;font-weight:bold;">Change</div>
<div class="t" style="left:301.30px;width:800px;text-align:center;top:537.99px;font-size:11px;line-height:11px;color:#6aa84f;font-weight:bold;">+0.9</div>
<div class="t" style="left:301.30px;width:800px;text-align:center;top:559.39px;font-size:11px;line-height:11px;color:#6aa84f;font-weight:bold;">+19.6%</div>
<svg class="r" style="left:655.70px;top:559.20px;" width="11.6" height="11.3" viewBox="0 0 11.6 11.3"><path d="M5.8 0 L11.6 11.3 H0Z" fill="#6aa84f"/></svg>
<div class="r" style="left:543.10px;top:608.00px;width:13.60px;height:1.60px;background:#cc0000;"></div>
<div class="r" style="left:562.82px;top:599.85px;width:13.60px;height:9.75px;background:#ffd966;"></div>
<div class="r" style="left:582.54px;top:595.56px;width:13.60px;height:14.04px;background:#ffd966;"></div>
<div class="r" style="left:602.26px;top:604.34px;width:13.60px;height:5.26px;background:#ffd966;"></div>
<div class="r" style="left:621.98px;top:591.47px;width:13.60px;height:18.13px;background:#ffd966;"></div>
<div class="r" style="left:641.70px;top:608.00px;width:13.60px;height:1.60px;background:#cc0000;"></div>
<div class="r" style="left:661.42px;top:595.56px;width:13.60px;height:14.04px;background:#ffd966;"></div>
<div class="r" style="left:681.14px;top:587.18px;width:13.60px;height:22.42px;background:#ffd966;"></div>
<div class="r" style="left:700.86px;top:582.70px;width:13.60px;height:26.90px;background:#ffd966;"></div>
<div class="r" style="left:720.58px;top:599.85px;width:13.60px;height:9.75px;background:#ffd966;"></div>
<div class="r" style="left:740.30px;top:578.80px;width:13.60px;height:30.80px;background:#008000;"></div>
<div class="r" style="left:760.02px;top:595.56px;width:13.60px;height:14.04px;background:#ffd966;"></div>
<div class="r" style="left:784.50px;top:458.10px;width:243.25px;height:153.90px;background:#ffffff;border:1px solid #404040;border-top:none;box-sizing:border-box;"></div>
<div class="r" style="left:784.50px;top:430.80px;width:243.25px;height:27.90px;background:#bf9000;border:1px solid #8c6a00;box-sizing:border-box;"></div>
<div class="t" style="left:506.10px;width:800px;text-align:center;top:438.64px;font-size:12px;line-height:12px;color:#fff2cc;font-weight:bold;">EBITDA</div>
<div class="r" style="left:785.00px;top:515.90px;width:242.25px;height:1.10px;background:#3a3a3a;"></div>
<div class="r" style="left:785.00px;top:576.00px;width:242.25px;height:1.90px;background:#888888;"></div>
<div class="r" style="left:804.00px;top:482.10px;width:20.8px;height:20.8px;border-radius:50%;background:#cc0000;"></div>
<div class="t" style="left:535.50px;width:800px;text-align:center;top:470.93px;font-size:33.4px;line-height:33.4px;color:#7f6000;font-weight:bold;">93500.0</div>
<div class="t" style="right:362.70px;text-align:right;top:520.74px;font-size:10.7px;line-height:10.7px;color:#000;font-weight:bold;">Target Value:</div>
<div class="t" style="left:548.80px;width:800px;text-align:center;top:520.49px;font-size:11px;line-height:11px;color:#000;font-weight:bold;">96305.0</div>
<div class="t" style="right:362.70px;text-align:right;top:538.24px;font-size:10.7px;line-height:10.7px;color:#000;font-weight:bold;">Change</div>
<div class="t" style="left:548.80px;width:800px;text-align:center;top:537.99px;font-size:11px;line-height:11px;color:#bb2020;font-weight:bold;">-2,805.0</div>
<div class="t" style="left:548.80px;width:800px;text-align:center;top:559.39px;font-size:11px;line-height:11px;color:#bb2020;font-weight:bold;">-2.9%</div>
<svg class="r" style="left:903.20px;top:559.20px;" width="11.6" height="11.3" viewBox="0 0 11.6 11.3"><path d="M0 0 H11.6 L5.8 11.3Z" fill="#cc0000"/></svg>
<div class="r" style="left:790.60px;top:608.00px;width:13.60px;height:1.60px;background:#cc0000;"></div>
<div class="r" style="left:810.32px;top:594.39px;width:13.60px;height:15.21px;background:#ffd966;"></div>
<div class="r" style="left:830.04px;top:598.49px;width:13.60px;height:11.11px;background:#ffd966;"></div>
<div class="r" style="left:849.76px;top:588.55px;width:13.60px;height:21.05px;background:#ffd966;"></div>
<div class="r" style="left:869.48px;top:584.26px;width:13.60px;height:25.34px;background:#ffd966;"></div>
<div class="r" style="left:889.20px;top:597.32px;width:13.60px;height:12.28px;background:#ffd966;"></div>
<div class="r" style="left:908.92px;top:590.11px;width:13.60px;height:19.49px;background:#ffd966;"></div>
<div class="r" style="left:928.64px;top:582.70px;width:13.60px;height:26.90px;background:#ffd966;"></div>
<div class="r" style="left:948.36px;top:592.64px;width:13.60px;height:16.96px;background:#ffd966;"></div>
<div class="r" style="left:968.08px;top:585.62px;width:13.60px;height:23.98px;background:#ffd966;"></div>
<div class="r" style="left:987.80px;top:588.55px;width:13.60px;height:21.05px;background:#ffd966;"></div>
<div class="r" style="left:1007.52px;top:578.80px;width:13.60px;height:30.80px;background:#008000;"></div>
<div class="r" style="left:1032.00px;top:458.10px;width:243.25px;height:153.90px;background:#ffffff;border:1px solid #404040;border-top:none;box-sizing:border-box;"></div>
<div class="r" style="left:1032.00px;top:430.80px;width:243.25px;height:27.90px;background:#bf9000;border:1px solid #8c6a00;box-sizing:border-box;"></div>
<div class="t" style="left:753.60px;width:800px;text-align:center;top:438.64px;font-size:12px;line-height:12px;color:#fff2cc;font-weight:bold;">Compliance Incident Rate</div>
<div class="r" style="left:1032.50px;top:515.90px;width:242.25px;height:1.10px;background:#3a3a3a;"></div>
<div class="r" style="left:1032.50px;top:576.00px;width:242.25px;height:1.90px;background:#888888;"></div>
<div class="r" style="left:1051.50px;top:482.10px;width:20.8px;height:20.8px;border-radius:50%;background:#cc0000;"></div>
<div class="t" style="left:783.00px;width:800px;text-align:center;top:470.93px;font-size:33.4px;line-height:33.4px;color:#7f6000;font-weight:bold;">1.0</div>
<div class="t" style="right:115.20px;text-align:right;top:520.74px;font-size:10.7px;line-height:10.7px;color:#000;font-weight:bold;">Target Value:</div>
<div class="t" style="left:796.30px;width:800px;text-align:center;top:520.49px;font-size:11px;line-height:11px;color:#000;font-weight:bold;">0.8</div>
<div class="t" style="right:115.20px;text-align:right;top:538.24px;font-size:10.7px;line-height:10.7px;color:#000;font-weight:bold;">Change</div>
<div class="t" style="left:796.30px;width:800px;text-align:center;top:537.99px;font-size:11px;line-height:11px;color:#bb2020;font-weight:bold;">+0.2</div>
<div class="t" style="left:796.30px;width:800px;text-align:center;top:559.39px;font-size:11px;line-height:11px;color:#bb2020;font-weight:bold;">+25.0%</div>
<svg class="r" style="left:1150.70px;top:559.20px;" width="11.6" height="11.3" viewBox="0 0 11.6 11.3"><path d="M5.8 0 L11.6 11.3 H0Z" fill="#cc0000"/></svg>
<div class="r" style="left:1038.10px;top:578.80px;width:13.60px;height:30.80px;background:#008000;"></div>
<div class="r" style="left:1057.82px;top:593.42px;width:13.60px;height:16.18px;background:#ffd966;"></div>
<div class="r" style="left:1077.54px;top:578.80px;width:13.60px;height:30.80px;background:#008000;"></div>
<div class="r" style="left:1116.98px;top:593.42px;width:13.60px;height:16.18px;background:#ffd966;"></div>
<div class="r" style="left:1136.70px;top:593.42px;width:13.60px;height:16.18px;background:#ffd966;"></div>
<div class="r" style="left:1156.42px;top:578.80px;width:13.60px;height:30.80px;background:#008000;"></div>
<div class="r" style="left:1176.14px;top:593.42px;width:13.60px;height:16.18px;background:#ffd966;"></div>
<div class="r" style="left:1195.86px;top:593.42px;width:13.60px;height:16.18px;background:#ffd966;"></div>
<div class="r" style="left:1235.30px;top:578.80px;width:13.60px;height:30.80px;background:#008000;"></div>
<div class="r" style="left:1278.60px;top:204.60px;width:1.40px;height:29.80px;background:#4a78b8;"></div>
</body></html>
